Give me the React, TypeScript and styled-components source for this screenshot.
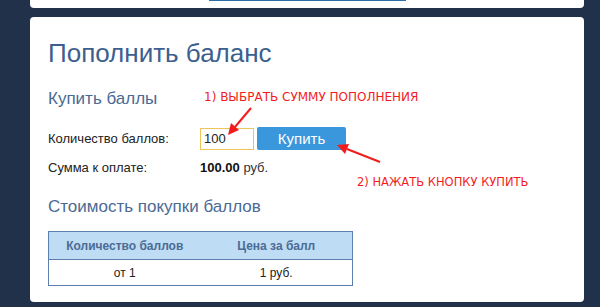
import styled, { createGlobalStyle } from "styled-components"

const Global = createGlobalStyle`
  html, body {
    margin: 0;
    padding: 0;
    background: #21314a;
    font-family: "Liberation Sans", Arial, sans-serif;
  }
`

const App = () => {
  return (
    <Page>
      <Global />
      <TopCard>
        <TopBar />
      </TopCard>
      <Card>
        <Title>Пополнить баланс</Title>
        <Section $top={21}>Купить баллы</Section>
        <Form>
          <Row>
            <Label>Количество баллов:</Label>
            <Amount value="100" readOnly />
            <BuyButton>Купить</BuyButton>
          </Row>
          <Row>
            <Label>Сумма к оплате:</Label>
            <Value>
              <b>100.00</b> руб.
            </Value>
          </Row>
        </Form>
        <Section $top={18}>Стоимость покупки баллов</Section>
        <Table>
          <thead>
            <tr>
              <Th>Количество баллов</Th>
              <Th>Цена за балл</Th>
            </tr>
          </thead>
          <tbody>
            <tr>
              <Td>от 1</Td>
              <Td>1 руб.</Td>
            </tr>
          </tbody>
        </Table>

        <Note $x={174} $y={73} $size={12}>1) ВЫБРАТЬ СУММУ ПОПОЛНЕНИЯ</Note>
        <Note $x={327} $y={158} $size={11.5}>2) НАЖАТЬ КНОПКУ КУПИТЬ</Note>
        <Arrows width="555" height="285" viewBox="0 0 555 285">
          <line x1="221" y1="91" x2="205" y2="110" stroke="#f21c1c" strokeWidth="2" />
          <polygon points="198,118 209,113 201,106" fill="#f21c1c" />
          <line x1="350" y1="145" x2="317" y2="132" stroke="#f21c1c" strokeWidth="2" />
          <polygon points="307,128 319,127 315,137" fill="#f21c1c" />
        </Arrows>
      </Card>
    </Page>
  )
}

export default App

const Page = styled.div`
  width: 600px;
  height: 307px;
  padding-left: 30px;
  box-sizing: border-box;
  overflow: hidden;
`

const TopCard = styled.div`
  width: 554px;
  height: 8px;
  background: #fff;
  border-radius: 0 0 4px 4px;
  display: flex;
  justify-content: center;
`

const TopBar = styled.div`
  width: 197px;
  height: 1px;
  background: #2b6cab;
`

const Card = styled.div`
  position: relative;
  margin-top: 9px;
  width: 554px;
  height: 285px;
  background: #fff;
  border-radius: 4px;
  padding: 21px 18px 0;
  box-sizing: border-box;
`

const Title = styled.h1`
  margin: 0;
  font-size: 26px;
  font-weight: normal;
  line-height: 30px;
  color: #3d5f8e;
`

const Section = styled.h2<{ $top: number }>`
  margin: ${({ $top }) => $top}px 0 0;
  font-size: 17px;
  font-weight: normal;
  line-height: 20px;
  color: #4a6a94;
`

const Form = styled.div`
  margin-top: 18px;
  display: flex;
  flex-direction: column;
  gap: 6px;
`

const Row = styled.div`
  display: flex;
  align-items: center;
  height: 23px;
`

const Label = styled.div`
  width: 152px;
  font-size: 13px;
  color: #222;
`

const Amount = styled.input`
  width: 54px;
  height: 22px;
  box-sizing: border-box;
  border: 1px solid #eec55a;
  padding: 0 3px;
  font-family: "Liberation Sans", Arial, sans-serif;
  font-size: 13px;
  color: #222;
  outline: none;
`

const BuyButton = styled.button`
  margin-left: 3px;
  width: 89px;
  height: 23px;
  border: none;
  border-radius: 2px;
  background: #3a97dc;
  color: #fff;
  font-family: "Liberation Sans", Arial, sans-serif;
  font-size: 15px;
  padding: 0;
`

const Value = styled.div`
  font-size: 13px;
  color: #333;
  b {
    color: #111;
  }
`

const Table = styled.table`
  margin-top: 14px;
  width: 305px;
  border-collapse: collapse;
  border: 1px solid #5d7fae;
`

const Th = styled.th`
  width: 50%;
  height: 27px;
  background: #bedcf3;
  border-bottom: 1px solid #5d7fae;
  font-size: 12px;
  font-weight: bold;
  color: #4c6b95;
  padding: 0;
`

const Td = styled.td`
  height: 25px;
  text-align: center;
  font-size: 12px;
  color: #222;
  padding: 0;
`

const Note = styled.div<{ $x: number; $y: number; $size: number }>`
  position: absolute;
  left: ${({ $x }) => $x}px;
  top: ${({ $y }) => $y}px;
  font-family: "DejaVu Sans", Verdana, sans-serif;
  font-size: ${({ $size }) => $size}px;
  color: #f21c1c;
  white-space: nowrap;
`

const Arrows = styled.svg`
  position: absolute;
  left: 0;
  top: 0;
  pointer-events: none;
`
